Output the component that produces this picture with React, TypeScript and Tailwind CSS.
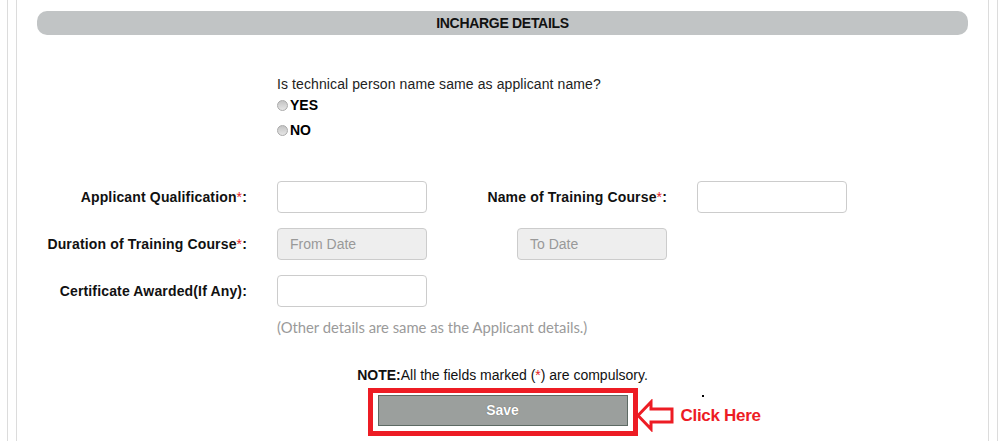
import React from 'react'

const label = "text-[14px] font-bold text-[#111] text-right leading-[16px] tracking-[0.15px]"
const textInput = "h-[32px] w-[150px] rounded-[4px] border border-[#cccccc] bg-white"
const dateInput =
  "h-[32px] w-[150px] rounded-[4px] border border-[#cccccc] bg-[#eeeeee] px-[12px] text-[14px] text-[#999999] flex items-center"

function Star() {
  return <span className="text-[#e31b23] font-normal">*</span>
}

function Radio({ text }: { text: string }) {
  return (
    <div className="flex items-center h-[16px]">
      <span className="inline-block w-[11px] h-[11px] rounded-full border border-[#aaaaaa] bg-gradient-to-b from-[#c4c4c4] to-[#e6e6e6]" />
      <span className="ml-[2px] text-[14px] font-bold text-black">{text}</span>
    </div>
  )
}

export default function App() {
  return (
    <div className="w-[1005px] h-[441px] overflow-hidden bg-white font-['Liberation_Sans',Arial,sans-serif]">
      <div className="mx-[7px] h-full border-x border-[#dcdcdc]">
        <div className="mx-[8px] h-full border-x border-[#dcdcdc] flex flex-col">
          {/* Section header */}
          <div className="mx-[20px] mt-[11px] h-[24px] rounded-[10px] bg-[#c1c4c5] flex items-center justify-center">
            <span className="text-[14px] font-bold text-[#111] tracking-[-0.3px]">INCHARGE DETAILS</span>
          </div>

          {/* Question */}
          <div className="pl-[260px] mt-[41px]">
            <p className="text-[14px] leading-[16px] text-[#222] tracking-[0.1px]">Is technical person name same as applicant name?</p>
            <div className="mt-[5px]">
              <Radio text="YES" />
            </div>
            <div className="mt-[9px]">
              <Radio text="NO" />
            </div>
          </div>

          {/* Form grid */}
          <div className="mt-[43px] grid grid-cols-[230px_150px_210px_150px] gap-x-[30px] gap-y-[15px] items-center">
            <div className={label}>
              Applicant Qualification<Star />:
            </div>
            <div className={textInput} />
            <div className={label}>
              Name of Training Course<Star />:
            </div>
            <div className={textInput} />

            <div className={label}>
              Duration of Training Course<Star />:
            </div>
            <div className={dateInput}>From Date</div>
            <div className={`${dateInput} justify-self-end`}>To Date</div>
            <div />

            <div className={label}>Certificate Awarded(If Any):</div>
            <div className={textInput} />
            <div />
            <div />
          </div>

          <p className="pl-[260px] mt-[12px] text-[14.8px] leading-[16px] text-[#9a9a9a] font-['Lato',sans-serif]">
            (Other details are same as the Applicant details.)
          </p>

          <p className="mt-[32px] text-center text-[14px] leading-[16px] text-[#111]">
            <span className="font-bold">NOTE:</span>All the fields marked (<span className="text-[#e31b23]">*</span>) are compulsory.
          </p>

          {/* Save button with annotation */}
          <div className="mt-[5px] flex justify-center">
            <div className="relative border-[5px] border-[#ed1c24] pt-[2px] pb-[5px] px-[5px]">
              <button className="w-[250px] h-[31px] bg-[#9b9f9d] border border-[#5d6a64] text-white text-[14px] font-bold [text-shadow:0_0_1px_#555]">
                Save
              </button>
              <div className="absolute left-[calc(100%+3px)] top-[6px] flex items-center whitespace-nowrap">
                <svg width="38" height="33" viewBox="0 0 38 33">
                  <polygon
                    points="2,16.5 15,3 15,10 36,10 36,23 15,23 15,30"
                    fill="none"
                    stroke="#ed1c24"
                    strokeWidth="3"
                    strokeLinejoin="miter"
                  />
                </svg>
                <span className="ml-[7px] text-[17px] font-bold text-[#ed1c24] tracking-[-0.3px]">Click Here</span>
              </div>
              <span className="absolute left-[329px] top-[2px] w-[2px] h-[2px] bg-black" />
            </div>
          </div>
        </div>
      </div>
    </div>
  )
}
